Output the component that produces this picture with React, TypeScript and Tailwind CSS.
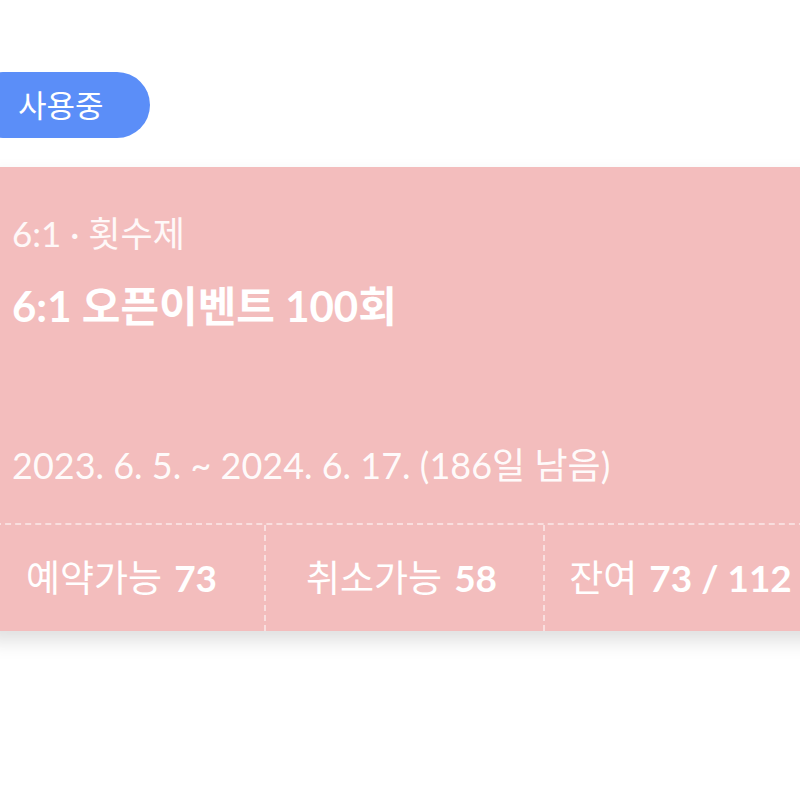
const stats = [
  { label: "예약가능", value: "73" },
  { label: "취소가능", value: "58" },
  { label: "잔여", value: "73 / 112" },
];

export default function App() {
  return (
    <div
      className="h-[800px] w-[800px] overflow-hidden bg-white"
      style={{ fontFamily: "Lato, 'Noto Sans CJK KR', sans-serif" }}
    >
      <div className="pt-[72px]">
        <span className="ml-[-30px] inline-flex h-[66px] items-center rounded-full bg-[#5b8ef8] pl-[48px] pr-[46px] text-[31px] text-white">
          사용중
        </span>
      </div>

      <div className="mt-[29px] ml-[-15px] w-[840px] bg-[#f3bdbd] text-white shadow-[0_10px_18px_rgba(0,0,0,0.13)]">
        <div className="pl-[27px] pt-[44px]">
          <p className="text-[35px] leading-[44px] text-white/90">6:1 · 횟수제</p>
          <p className="mt-[26px] text-[42px] font-bold leading-[50px]">6:1 오픈이벤트 100회</p>
          <p className="mt-[112px] pb-[36px] text-[36px] leading-[44px] text-white/95">
            2023. 6. 5. ~ 2024. 6. 17. (186일 남음)
          </p>
        </div>
        <div className="flex h-[108px] border-t-2 border-dashed border-white/50">
          {stats.map((s, i) => (
            <div
              key={s.label}
              className={`flex w-[279px] items-center justify-center gap-[12px] pr-[6px] text-[37px] ${
                i > 0 ? "border-l-2 border-dashed border-white/50" : ""
              }`}
            >
              <span>{s.label}</span>
              <span className="font-bold">{s.value}</span>
            </div>
          ))}
        </div>
      </div>
    </div>
  );
}
